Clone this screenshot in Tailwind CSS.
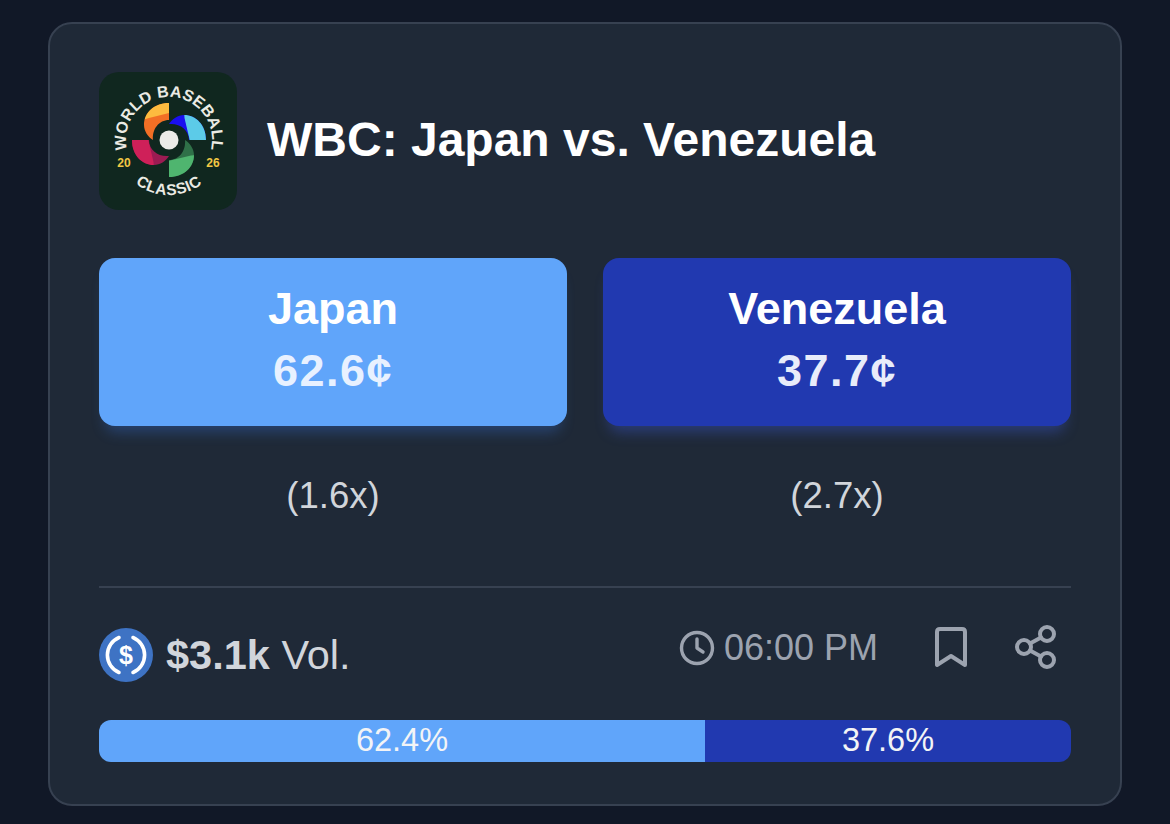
<!DOCTYPE html>
<html lang="en">
<head>
    <meta charset="UTF-8">
    <title>WBC: Japan vs. Venezuela</title>
    <script src="https://cdn.jsdelivr.net/npm/@tailwindcss/browser@4"></script>
</head>
<body class="bg-[#111827] font-['Liberation_Sans',sans-serif]">
    <div class="w-[1170px] h-[824px] pt-[22px] pl-[48px] overflow-hidden">
        <div class="w-[1074px] h-[784px] bg-[#1f2937] border-2 border-[#374151] rounded-[24px] px-[49px] pt-[48px] pb-[42px] flex flex-col">
            <!-- Header -->
            <div class="flex items-center gap-[30px] mb-[48px]">
                <svg class="w-[138px] h-[138px] rounded-[20px] shrink-0" viewBox="0 0 138 138">
                    <defs>
                        <path id="top-arc" d="M70 111 A43 43 0 1 1 70 25 A43 43 0 1 1 70 111"></path>
                        <path id="bottom-arc" d="M70 13 A55 55 0 1 0 70 123 A55 55 0 1 0 70 13"></path>
                        <clipPath id="petal"><path d="M0 -37 C-15 -37 -25 -27 -25 -15 C-25 -9 -21 -3 -16 0 C-17 -11 -10 -20 0 -20 Z"></path></clipPath>
                    </defs>
                    <rect width="138" height="138" fill="#10271f"></rect>
                    <g transform="translate(70 68)">
                        <g clip-path="url(#petal)">
                            <rect x="-30" y="-40" width="34" height="44" fill="#f26f25"></rect>
                            <path d="M0 -40 H-30 V-19 L-20 -22 L0 -27 Z" fill="#fdbb3f"></path>
                        </g>
                        <g transform="rotate(90)" clip-path="url(#petal)">
                            <rect x="-30" y="-40" width="34" height="44" fill="#1a0ff0"></rect>
                            <path d="M0 -40 H-30 V-15 L-22 -15.5 L0 -20.7 Z" fill="#5ccbe8"></path>
                        </g>
                        <g transform="rotate(180)" clip-path="url(#petal)">
                            <rect x="-30" y="-40" width="34" height="44" fill="#2f7048"></rect>
                            <path d="M0 -40 H-30 V-15 L-22 -15.5 L0 -20.7 Z" fill="#4fb56f"></path>
                        </g>
                        <g transform="rotate(270)" clip-path="url(#petal)">
                            <rect x="-30" y="-40" width="34" height="44" fill="#9c1b52"></rect>
                            <path d="M0 -40 H-30 V-15 L-22 -15.5 L0 -20.7 Z" fill="#cf2059"></path>
                        </g>
                        <circle r="9.5" fill="#ebebe8"></circle>
                    </g>
                    <text fill="#ebebe4" font-size="16" font-weight="700" font-family="Liberation Sans" letter-spacing="0.2" text-anchor="middle"><textPath href="#top-arc" startOffset="50%">WORLD BASEBALL</textPath></text>
                    <text fill="#ebebe4" font-size="15.5" font-weight="700" font-family="Liberation Sans" letter-spacing="0.6" text-anchor="middle"><textPath href="#bottom-arc" startOffset="50%">CLASSIC</textPath></text>
                    <text x="25" y="95" fill="#f2c744" font-size="12" font-weight="700" font-family="Liberation Sans" text-anchor="middle">20</text>
                    <text x="114" y="95" fill="#f2c744" font-size="12" font-weight="700" font-family="Liberation Sans" text-anchor="middle">26</text>
                </svg>
                <h1 class="text-[48px] leading-none font-bold text-white whitespace-nowrap pb-[2px]">WBC: Japan vs. Venezuela</h1>
            </div>

            <!-- Outcomes -->
            <div class="grid grid-cols-2 gap-[36px]">
                <div>
                    <button class="w-full h-[168px] pb-[4px] rounded-[16px] bg-[#60a5fa] shadow-[0_12px_14px_-6px_rgba(59,130,246,0.3)] flex flex-col items-center justify-center text-[45px] leading-[62px] font-bold">
                        <span class="text-white">Japan</span>
                        <span class="text-[#e8f1ff] tracking-[1.5px]">62.6¢</span>
                    </button>
                    <div class="mt-[50px] text-center text-[36.5px] leading-[40px] text-[#d1d5db]">(1.6x)</div>
                </div>
                <div>
                    <button class="w-full h-[168px] pb-[4px] rounded-[16px] bg-[#2139b0] shadow-[0_12px_14px_-6px_rgba(59,90,220,0.4)] flex flex-col items-center justify-center text-[45px] leading-[62px] font-bold">
                        <span class="text-white">Venezuela</span>
                        <span class="text-[#e8ecfa] tracking-[1.5px]">37.7¢</span>
                    </button>
                    <div class="mt-[50px] text-center text-[36.5px] leading-[40px] text-[#d1d5db]">(2.7x)</div>
                </div>
            </div>

            <div class="h-[2px] bg-[#374151] mt-[70px] shrink-0"></div>

            <!-- Stats row -->
            <div class="flex justify-between mt-[39px] h-[56px] shrink-0">
                <div class="flex items-center gap-[13px] text-[41.5px] text-[#d1d5db]">
                    <svg class="w-[54px] h-[54px]" viewBox="0 0 54 54">
                        <circle cx="27" cy="27" r="27" fill="#3e73c4"></circle>
                        <path d="M20 9.5 A19 19 0 0 0 20 44.5 M34 9.5 A19 19 0 0 1 34 44.5" fill="none" stroke="#fff" stroke-width="3.6" stroke-linecap="round"></path>
                        <text x="27" y="36" fill="#fff" font-size="25" font-weight="700" font-family="Liberation Sans" text-anchor="middle">$</text>
                    </svg>
                    <span class="whitespace-nowrap"><span class="font-bold">$3.1k</span> Vol.</span>
                </div>
                <div class="flex items-start mr-[14px]">
                    <svg class="w-[36px] h-[36px] mt-[3px] mr-[9px] text-[#9ca3af]" viewBox="0 0 36 36" fill="none" stroke="currentColor" stroke-width="3.4" stroke-linecap="round" stroke-linejoin="round">
                        <circle cx="18" cy="18" r="15.5"></circle>
                        <path d="M18 9 V18 L24 22"></path>
                    </svg>
                    <span class="text-[36px] leading-[42px] text-[#9ca3af]">06:00 PM</span>
                    <svg class="w-[34px] h-[42px] ml-[56px] mt-[-1px] text-[#9ca3af]" viewBox="0 0 34 42" fill="none" stroke="currentColor" stroke-width="4" stroke-linecap="round" stroke-linejoin="round">
                        <path d="M3 39 V6 Q3 3 6 3 H28 Q31 3 31 6 V39 L17 30 Z"></path>
                    </svg>
                    <svg class="w-[42px] h-[46px] ml-[47px] mt-[-3px] text-[#9ca3af]" viewBox="0 0 42 46" fill="none" stroke="currentColor" stroke-width="4" stroke-linecap="round" stroke-linejoin="round">
                        <circle cx="32" cy="10" r="7"></circle>
                        <circle cx="9" cy="23" r="7"></circle>
                        <circle cx="32" cy="36" r="7"></circle>
                        <path d="M15 19.5 L26 13.5 M15 26.5 L26 32.5"></path>
                    </svg>
                </div>
            </div>

            <!-- Volume split bar -->
            <div class="flex h-[42px] mt-[37px] shrink-0 rounded-[12px] overflow-hidden text-[32.5px] leading-[38px] text-[#f3f4f6]">
                <div class="bg-[#60a5fa] flex items-center justify-center pb-[3px]" style="width: 62.35%">62.4%</div>
                <div class="bg-[#2139b0] flex items-center justify-center pb-[3px]" style="width: 37.65%">37.6%</div>
            </div>
        </div>
    </div>
</body>
</html>
